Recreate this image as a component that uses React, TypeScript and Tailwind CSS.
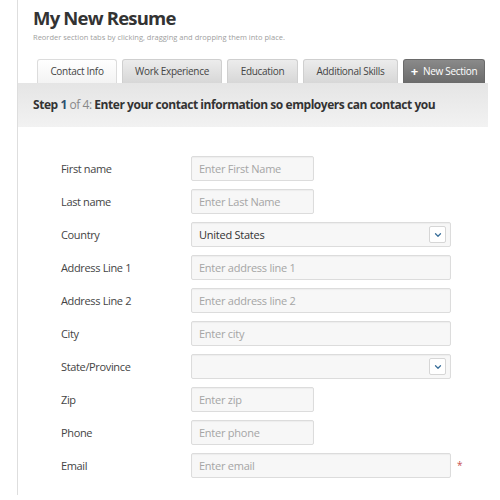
import { ChevronDown } from "lucide-react";

type Field = {
  label: string;
  placeholder?: string;
  value?: string;
  size: "short" | "long";
  select?: boolean;
  required?: boolean;
};

const tabs = ["Contact Info", "Work Experience", "Education", "Additional Skills"];
const tabWidths = ["w-[80px]", "w-[100px]", "w-[71px]", "w-[95px]"];

const fields: Field[] = [
  { label: "First name", placeholder: "Enter First Name", size: "short" },
  { label: "Last name", placeholder: "Enter Last Name", size: "short" },
  { label: "Country", value: "United States", size: "long", select: true },
  { label: "Address Line 1", placeholder: "Enter address line 1", size: "long" },
  { label: "Address Line 2", placeholder: "Enter address line 2", size: "long" },
  { label: "City", placeholder: "Enter city", size: "long" },
  { label: "State/Province", size: "long", select: true },
  { label: "Zip", placeholder: "Enter zip", size: "short" },
  { label: "Phone", placeholder: "Enter phone", size: "short" },
  { label: "Email", placeholder: "Enter email", size: "long", required: true },
];

function FormRow({ field }: { field: Field }) {
  const width = field.size === "short" ? "w-[123px]" : "w-[260px]";
  return (
    <div className="flex h-[25px] items-center">
      <label className="w-[130px] text-[11px] tracking-[-0.35px] text-[#444]">{field.label}</label>
      <div
        className={`relative flex h-[25px] ${width} items-center rounded-[2px] border border-[#dcdcdc] bg-[#f7f7f7] px-[7px] text-[11px] tracking-[-0.25px] shadow-[inset_0_1px_1px_rgba(0,0,0,0.04)]`}
      >
        {field.value ? (
          <span className="text-[#333]">{field.value}</span>
        ) : (
          <span className="text-[#a5a5a5]">{field.placeholder}</span>
        )}
        {field.select && (
          <span className="absolute right-[4px] top-[3px] flex h-[17px] w-[17px] items-center justify-center rounded-[2px] border border-[#d6d6d6] bg-white">
            <ChevronDown size={10} strokeWidth={3} className="text-[#3a6f9a]" />
          </span>
        )}
      </div>
      {field.required && <span className="ml-[6px] text-[10px] text-[#c65050]">*</span>}
    </div>
  );
}

export default function App() {
  return (
    <div className="h-[500px] w-[500px] bg-white pl-[17px] font-['Open_Sans',sans-serif]">
      <div className="h-[495px] w-[471px] border-l border-[#dedede]">
        <div className="pl-[15px] pt-[5px]">
          <h1 className="text-[18.5px] font-bold leading-[26px] tracking-[-0.8px] text-[#333]">
            My New Resume
          </h1>
          <p className="mt-[1px] text-[7.5px] text-[#a0a0a0]">
            Reorder section tabs by clicking, dragging and dropping them into place.
          </p>
        </div>

        <div className="mt-[16px] flex gap-[5px] pl-[19px]">
          {tabs.map((tab, i) => (
            <div
              key={tab}
              className={`flex h-[24px] ${tabWidths[i]} items-center justify-center rounded-t-[3px] border border-b-0 text-[10px] tracking-[-0.3px] text-[#444] ${
                i === 0
                  ? "border-[#dcdcdc] bg-gradient-to-b from-white to-[#f3f3f3]"
                  : "border-[#cfcfcf] bg-gradient-to-b from-[#ececec] to-[#d7d7d7]"
              }`}
            >
              {tab}
            </div>
          ))}
          <div className="flex h-[24px] w-[82px] items-center justify-center gap-[5px] rounded-t-[3px] border border-b-0 border-[#6a6a6a] bg-gradient-to-b from-[#8a8a8a] to-[#6b6b6b] text-[10px] tracking-[-0.3px] text-white">
            <span className="text-[13px] font-bold leading-none">+</span>
            <span>New Section</span>
          </div>
        </div>

        <div className="flex h-[44px] items-center bg-gradient-to-b from-[#e5e5e5] to-[#f2f2f2] pl-[15px] text-[12px] font-bold tracking-[-0.45px] text-[#333]">
          <span>
            Step <span className="text-[#2f4f6f]">1</span>{" "}
            <span className="font-normal text-[#888]">of 4:</span> Enter your contact information so
            employers can contact you
          </span>
        </div>

        <div className="flex flex-col gap-[8px] pl-[43px] pt-[29px]">
          {fields.map((f) => (
            <FormRow key={f.label} field={f} />
          ))}
        </div>
      </div>
    </div>
  );
}
